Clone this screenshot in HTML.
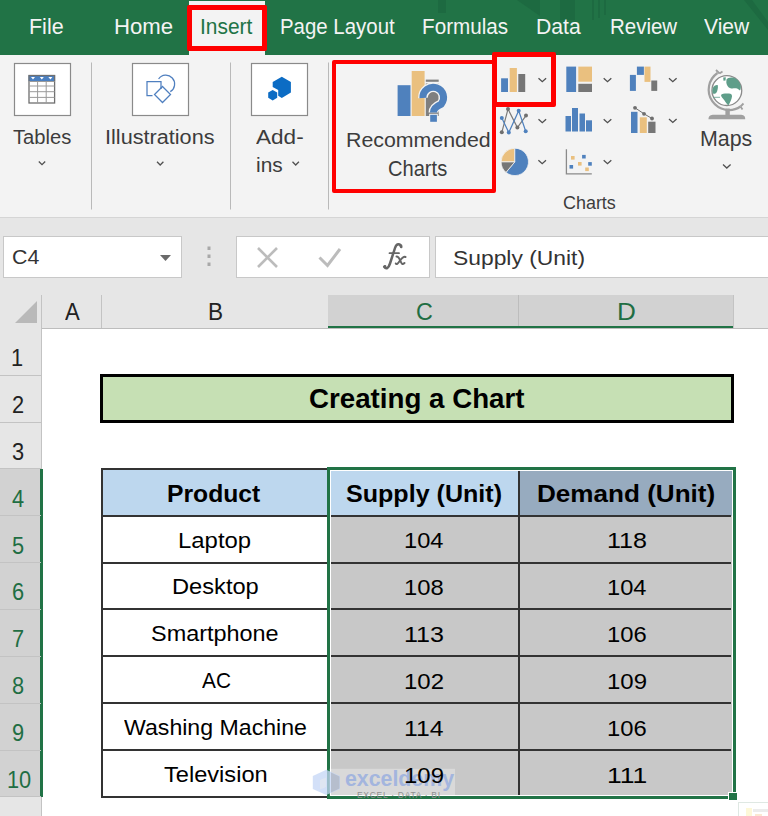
<!DOCTYPE html>
<html><head><meta charset="utf-8">
<style>
*{margin:0;padding:0;box-sizing:border-box}
html,body{width:768px;height:816px;overflow:hidden;background:#fff;font-family:"Liberation Sans",sans-serif;position:relative}
.a{position:absolute}
.t{position:absolute;white-space:nowrap;line-height:1;transform-origin:0 0}
svg{position:absolute;left:0;top:0}
</style></head><body>
<!-- tab bar -->
<div class="a" style="left:0;top:0;width:768px;height:55px;background:#217346"></div>
<svg width="768" height="55" viewBox="0 0 768 55" style="position:absolute;left:0;top:0">
<g fill="#1d6a41">
<rect x="438" y="0" width="8" height="13"/>
<polygon points="517,0 540,0 540,16"/>
<rect x="560" y="0" width="15" height="20"/>
<rect x="592" y="0" width="2" height="20"/><rect x="598" y="0" width="2" height="18"/><rect x="604" y="0" width="2" height="15"/>
<polygon points="744,0 752,0 768,22 768,30"/>
</g>
</svg>
<div class="a" style="left:189px;top:1px;width:76px;height:54px;background:#f3f3f3"></div>
<!-- ribbon -->
<div class="a" style="left:0;top:55px;width:768px;height:162px;background:#f3f3f3"></div>
<div class="a" style="left:0;top:217px;width:768px;height:1px;background:#d5d5d5"></div>
<!-- formula band -->
<div class="a" style="left:0;top:218px;width:768px;height:77px;background:#e6e6e6"></div>
<div class="a" style="left:3px;top:236px;width:179px;height:42px;background:#fff;border:1px solid #c8c8c8"></div>
<div class="a" style="left:236px;top:236px;width:194px;height:42px;background:#fff;border:1px solid #c8c8c8"></div>
<div class="a" style="left:435px;top:236px;width:340px;height:42px;background:#fff;border:1px solid #c8c8c8"></div>
<!-- column header -->
<div class="a" style="left:0;top:295px;width:768px;height:33px;background:#e6e6e6"></div>
<div class="a" style="left:328px;top:295px;width:405.5px;height:33px;background:#d2d2d2"></div>
<div class="a" style="left:0;top:328px;width:768px;height:1px;background:#bdbdbd"></div>
<div class="a" style="left:328px;top:326px;width:405.5px;height:2.4px;background:#217346"></div>
<div class="a" style="left:41px;top:295px;width:1px;height:33px;background:#c3c3c3"></div>
<div class="a" style="left:101px;top:295px;width:1px;height:33px;background:#c3c3c3"></div>
<div class="a" style="left:518px;top:295px;width:1px;height:31px;background:#bdbdbd"></div>
<div class="a" style="left:733px;top:295px;width:1px;height:33px;background:#c3c3c3"></div>
<!-- row header -->
<div class="a" style="left:0;top:328px;width:42px;height:488px;background:#e6e6e6"></div>
<div class="a" style="left:0;top:469px;width:42px;height:328px;background:#d2d2d2"></div>
<div class="a" style="left:41px;top:328px;width:1px;height:141px;background:#c3c3c3"></div>
<div class="a" style="left:41px;top:797px;width:1px;height:19px;background:#c3c3c3"></div>
<div class="a" style="left:40px;top:469px;width:2.6px;height:328px;background:#217346"></div>
<div class="a" style="left:0;top:374.66px;width:41px;height:1px;background:#c3c3c3"></div>
<div class="a" style="left:0;top:421.52px;width:41px;height:1px;background:#c3c3c3"></div>
<div class="a" style="left:0;top:468.38px;width:41px;height:1px;background:#c3c3c3"></div>
<div class="a" style="left:0;top:515.24px;width:41px;height:1px;background:#c3c3c3"></div>
<div class="a" style="left:0;top:562.10px;width:41px;height:1px;background:#c3c3c3"></div>
<div class="a" style="left:0;top:608.96px;width:41px;height:1px;background:#c3c3c3"></div>
<div class="a" style="left:0;top:655.82px;width:41px;height:1px;background:#c3c3c3"></div>
<div class="a" style="left:0;top:702.68px;width:41px;height:1px;background:#c3c3c3"></div>
<div class="a" style="left:0;top:749.54px;width:41px;height:1px;background:#c3c3c3"></div>
<div class="a" style="left:0;top:796.40px;width:41px;height:1px;background:#c3c3c3"></div>
<!-- title box -->
<div class="a" style="left:100px;top:374px;width:634px;height:48.5px;background:#c6e0b4;border:3px solid #000"></div>
<!-- table -->
<div class="a" style="left:101.5px;top:469px;width:226.5px;height:47px;background:#bdd7ee"></div>
<div class="a" style="left:328px;top:469px;width:191px;height:47px;background:#bdd7ee"></div>
<div class="a" style="left:519px;top:469px;width:214px;height:47px;background:#97abbf"></div>
<div class="a" style="left:328px;top:516px;width:405px;height:281px;background:#c8c8c8"></div>
<div class="a" style="left:101px;top:514.74px;width:630px;height:2px;background:#333"></div>
<div class="a" style="left:101px;top:561.60px;width:630px;height:2px;background:#333"></div>
<div class="a" style="left:101px;top:608.46px;width:630px;height:2px;background:#333"></div>
<div class="a" style="left:101px;top:655.32px;width:630px;height:2px;background:#333"></div>
<div class="a" style="left:101px;top:702.18px;width:630px;height:2px;background:#333"></div>
<div class="a" style="left:101px;top:749.04px;width:630px;height:2px;background:#333"></div>
<div class="a" style="left:101px;top:467.88px;width:630px;height:2px;background:#333"></div>
<div class="a" style="left:101px;top:795.90px;width:227px;height:2px;background:#333"></div>
<div class="a" style="left:101.20px;top:467.88px;width:2px;height:330.02px;background:#333"></div>
<div class="a" style="left:327.20px;top:467.88px;width:2px;height:330.02px;background:#333"></div>
<div class="a" style="left:517.80px;top:467.88px;width:2px;height:330.02px;background:#333"></div>
<!-- selection -->
<div class="a" style="left:326.7px;top:467px;width:409px;height:332.2px;border:3px solid #217346"></div>
<div class="a" style="left:329.7px;top:470px;width:403px;height:326.2px;border:1.5px solid #fff"></div>
<div class="a" style="left:729.3px;top:792.8px;width:7.5px;height:7.5px;background:#217346;outline:1.2px solid #fff"></div>
<!-- watermark -->
<svg width="768" height="816" viewBox="0 0 768 816" style="position:absolute;left:0;top:0">
<rect x="329.5" y="768.8" width="125.5" height="26.8" fill="#fff" opacity="0.32"/>
<polygon points="326.3,769.8 340,776 340,789 326.3,795 312.8,789 312.8,776" fill="#c4d5f5" opacity="0.75"/>
<polygon points="331,772.5 339.5,776.5 339.5,788.5 331,792.5" fill="#a8adb5" opacity="0.6"/>
<polygon points="320,780 326,777.5 326,787 320,789.5" fill="#e8eaee" opacity="0.6"/>
<text x="345" y="786.3" font-family="Liberation Sans" font-weight="bold" font-size="21.5" fill="#a3b5de" textLength="109" lengthAdjust="spacingAndGlyphs">exceldemy</text>
<text x="357" y="797.5" font-family="Liberation Sans" font-size="8.5" fill="#8f8f8f" textLength="83" lengthAdjust="spacing">EXCEL · DATA · BI</text>
</svg>
<!-- quick analysis -->
<div class="a" style="left:738px;top:802px;width:40px;height:20px;background:#fff;border:1px solid #dfe8e3"></div>
<div class="a" style="left:746px;top:808px;width:6px;height:8px;background:#fdf8d8"></div>
<div class="a" style="left:753px;top:809px;width:15px;height:3px;background:#ececec"></div>
<div class="a" style="left:755px;top:814px;width:7px;height:2px;background:#fbe8d2"></div>
<!-- red boxes -->
<div class="a" style="left:187px;top:5px;width:80px;height:45.5px;border:5px solid #f00;border-radius:2px"></div>
<div class="a" style="left:332px;top:60px;width:164px;height:133px;border:4.8px solid #f00;border-radius:2px"></div>
<div class="a" style="left:492px;top:52px;width:63.5px;height:54.5px;border:5px solid #f00;border-radius:2px"></div>
<svg width="768" height="816" viewBox="0 0 768 816">
<!-- Ribbon icon boxes -->
<rect x="14.5" y="63.5" width="56" height="52" fill="#fff" stroke="#8a8a8a" stroke-width="1.2"/>
<rect x="132.5" y="63.5" width="56" height="52" fill="#fff" stroke="#8a8a8a" stroke-width="1.2"/>
<rect x="251.5" y="63.5" width="56" height="52" fill="#fff" stroke="#8a8a8a" stroke-width="1.2"/>
<!-- separators -->
<rect x="91" y="62.5" width="1" height="147" fill="#b9b9b9"/>
<rect x="230" y="62.5" width="1" height="147" fill="#b9b9b9"/>
<rect x="328" y="62.5" width="1" height="147" fill="#b9b9b9"/>
<!-- table icon -->
<rect x="28.5" y="75.2" width="26.6" height="6" fill="#4a7fc0"/>
<rect x="29" y="75.5" width="25.6" height="27.5" fill="none" stroke="#6f6f6f" stroke-width="1.3"/>
<g stroke="#9a9a9a" stroke-width="1">
<line x1="29" y1="86" x2="54.6" y2="86"/><line x1="29" y1="91.7" x2="54.6" y2="91.7"/><line x1="29" y1="97.4" x2="54.6" y2="97.4"/>
<line x1="29" y1="81.5" x2="54.6" y2="81.5"/>
<line x1="37.6" y1="81" x2="37.6" y2="103"/><line x1="46.2" y1="81" x2="46.2" y2="103"/>
</g>
<g fill="#fff"><path d="M31,77 h4 l-2,2.5z"/><path d="M39.8,77 h4 l-2,2.5z"/><path d="M48.4,77 h4 l-2,2.5z"/></g>
<!-- illustrations icon -->
<g fill="none" stroke="#4f7fbf" stroke-width="1.25">
<path d="M152.5,95.5 H147 V81.5 H161 V89"/>
<path d="M162.5,86.5 L170.5,94.5 L162.5,102.5 L154.5,94.5 Z"/>
<path d="M158.6,79 A8.8,8.8 0 1 1 170.3,91.6"/>
</g>
<!-- add-ins icon -->
<path fill="#0c6cc4" d="M281.8,76.8 L290.9,82 L290.9,92.6 L281.8,97.9 L278.2,95.8 L278.2,90 L272.7,86.9 L272.7,82 Z"/>
<path fill="#0c6cc4" d="M272.7,90 L277.2,92.6 L277.2,97.8 L272.7,100.4 L268.2,97.8 L268.2,92.6 Z"/>
<!-- recommended charts icon -->
<rect x="397.6" y="85.2" width="12.9" height="30.8" fill="#4f81bd"/>
<rect x="411.7" y="71" width="12.9" height="45" fill="#eac07f"/>
<rect x="425.8" y="79.6" width="12.9" height="2.2" fill="#7f7f7f"/>
<rect x="425.8" y="83.5" width="12.9" height="32.5" fill="#7f7f7f"/>
<path d="M422.9,98 A10.35,10.35 0 1 1 441.2,104.2 Q433.4,107.5 433.4,112.5" fill="none" stroke="#f3f3f3" stroke-width="9.6"/>
<path d="M422.9,98 A10.35,10.35 0 1 1 441.2,104.2 Q433.4,107.5 433.4,112.5" fill="none" stroke="#4f81bd" stroke-width="7"/>
<rect x="429.2" y="113.8" width="8.6" height="9" fill="#f3f3f3"/>
<rect x="430.2" y="114.8" width="6.7" height="7" fill="#4f81bd"/>
<!-- charts group: column -->
<rect x="501.1" y="78.3" width="6.9" height="13.7" fill="#4f81bd"/>
<rect x="509.7" y="68" width="7.2" height="24" fill="#eac07f"/>
<rect x="518.3" y="74" width="6.9" height="18" fill="#767676"/>
<!-- hierarchy -->
<rect x="566.3" y="66.6" width="9.8" height="25.4" fill="#4f81bd"/>
<rect x="578.3" y="66.6" width="13.7" height="15.1" fill="#eac07f"/>
<rect x="578.3" y="83.8" width="13.7" height="8.2" fill="#767676"/>
<!-- waterfall -->
<rect x="629.9" y="74.9" width="6" height="16" fill="#4f81bd"/>
<rect x="636.9" y="66.6" width="7" height="8.3" fill="#4f81bd"/>
<rect x="644.5" y="66.6" width="6" height="15.3" fill="#eac07f"/>
<rect x="651.3" y="80.5" width="5.9" height="10.4" fill="#767676"/>
<!-- line/scatter -->
<polyline points="501.8,132.3 508,109.1 517.4,127.6 526,115.6" fill="none" stroke="#7a7a7a" stroke-width="1.2"/>
<polyline points="501.8,118 508.8,132.6 518.7,110.7 525.7,131.25" fill="none" stroke="#4f81bd" stroke-width="1.2"/>
<g fill="#6f6f6f"><circle cx="501.8" cy="132.3" r="2"/><circle cx="508" cy="109.1" r="2"/><circle cx="517.4" cy="127.6" r="2"/><circle cx="526" cy="115.6" r="2"/></g>
<g fill="#4f81bd"><circle cx="501.8" cy="118" r="2"/><circle cx="508.8" cy="132.6" r="2"/><circle cx="518.7" cy="110.7" r="2"/><circle cx="525.7" cy="131.25" r="2"/></g>
<!-- column 2 -->
<g fill="#4f81bd">
<rect x="565.5" y="116" width="5.5" height="15.5"/>
<rect x="572" y="108" width="6" height="23.5"/>
<rect x="579.5" y="113.5" width="5.5" height="18"/>
<rect x="586" y="120.3" width="6" height="11.2"/>
</g>
<!-- combo -->
<rect x="631" y="111.8" width="6.5" height="21.2" fill="#4f81bd"/>
<rect x="639.8" y="117.3" width="7" height="15.7" fill="#eac07f"/>
<rect x="648.2" y="121.7" width="7.3" height="11.3" fill="#767676"/>
<polyline points="635,107.8 644,113.8 652,118.5" fill="none" stroke="#6f6f6f" stroke-width="1"/>
<g fill="#6f6f6f"><circle cx="635" cy="107.8" r="1.9"/><circle cx="644" cy="113.8" r="1.9"/><circle cx="652" cy="118.5" r="1.9"/></g>
<!-- pie -->
<path d="M514.8,161.9 L501.1,161.9 A13.7,13.7 0 0 1 514.8,148.2 Z" fill="#eac07f" stroke="#f3f3f3" stroke-width="0.8"/>
<path d="M514.8,161.9 L514.8,148.2 A13.7,13.7 0 1 1 506,172.4 Z" fill="#4f81bd" stroke="#f3f3f3" stroke-width="0.8"/>
<path d="M514.8,161.9 L506,172.4 A13.7,13.7 0 0 1 501.1,161.9 Z" fill="#767676" stroke="#f3f3f3" stroke-width="0.8"/>
<!-- scatter -->
<polyline points="566.4,149.3 566.4,173.9 591.8,173.9" fill="none" stroke="#8a8a8a" stroke-width="1.3"/>
<g fill="#eac07f"><rect x="571" y="156" width="3.6" height="3.6"/><rect x="578" y="162" width="3.6" height="3.6"/><rect x="585.2" y="167.5" width="3.6" height="3.6"/></g>
<g fill="#4f81bd"><rect x="582.1" y="154.9" width="3.6" height="3.6"/><rect x="588.2" y="162.1" width="3.6" height="3.6"/><rect x="569.5" y="165" width="3.6" height="3.6"/></g>
<!-- globe -->
<path d="M717.5,73 A19.5,19.5 0 0 0 740.5,106.5" fill="none" stroke="#a0a0a0" stroke-width="2.2"/>
<path d="M716,70 l3.5,3.5 M719.5,73.5 l3,-2" stroke="#a0a0a0" stroke-width="1.8" fill="none"/>
<path d="M740.5,106.5 l3,-3 M740.5,106.5 l2,3" stroke="#a0a0a0" stroke-width="1.8" fill="none"/>
<circle cx="726.85" cy="90.6" r="14.9" fill="#fff" stroke="#8a8a8a" stroke-width="1.3"/>
<path fill="#5f9e8a" d="M726.5,79.5 C727.5,77.5 731,77 734,77.8 C737.5,79 740,82 740.8,86 C741,88 740.6,90 740,90.5 C738.5,89.5 737.5,88.5 736,88.3 C734,88.2 732.5,88.8 730.5,88.3 C728,87.5 726.5,85 726.3,82.5 Z"/>
<path fill="#5f9e8a" d="M721,95 C722,93.5 726,93.4 729,93.6 C731,93.8 732.2,94.5 732,96.5 C731.6,99.5 730,102.5 728.5,105.3 C727,104.5 725.8,102.5 724.5,100.5 C723,98.5 721.2,97 721,95 Z"/>
<path fill="#5f9e8a" d="M712.8,88 C713.8,85.8 716,84.8 717.8,85.2 C718.2,87.5 717.6,90.5 716.5,92.5 C715.5,94 713.5,94.4 712.6,93 C712.2,91.5 712.3,89.5 712.8,88 Z"/>
<path fill="#5f9e8a" d="M723.2,77.5 l2.6,-0.3 l-0.3,3.2 l-2,0.3z"/>
<path d="M713,97.3 H720" stroke="#5f9e8a" stroke-width="0.8"/>
<rect x="725.4" y="108.5" width="4.4" height="7" fill="#a0a0a0"/>
<path d="M708.5,119.2 C708.5,116 710.5,114.8 714,114.8 L740,114.8 C743.5,114.8 745.2,116 745.2,119.2 Z" fill="#a0a0a0"/>
<!-- chevrons -->
<g fill="none" stroke="#505050" stroke-width="1.3">
<path d="M38.8,161.5 l3.2,3.2 l3.2,-3.2"/>
<path d="M157,161.8 l3.2,3.2 l3.2,-3.2"/>
<path d="M292.5,161.8 l3.2,3.2 l3.2,-3.2"/>
<path d="M723,164.5 l3.8,3.5 l3.8,-3.5"/>
<path d="M538.5,78.2 l3.8,3.5 l3.8,-3.5"/>
<path d="M603.7,78.2 l3.8,3.5 l3.8,-3.5"/>
<path d="M669,78.2 l3.8,3.5 l3.8,-3.5"/>
<path d="M538.5,119.2 l3.8,3.5 l3.8,-3.5"/>
<path d="M603.7,119.2 l3.8,3.5 l3.8,-3.5"/>
<path d="M669,118.9 l3.8,3.5 l3.8,-3.5"/>
<path d="M538.4,160.2 l3.8,3.5 l3.8,-3.5"/>
<path d="M603.7,160.2 l3.8,3.5 l3.8,-3.5"/>
</g>
<!-- formula bar icons -->
<path d="M160,255 h11 l-5.5,6z" fill="#6a6a6a"/>
<g fill="#a8a8a8"><rect x="207.5" y="246.5" width="3" height="3.5"/><rect x="207.5" y="254.5" width="3" height="3.5"/><rect x="207.5" y="262.5" width="3" height="3.5"/></g>
<path d="M258,248 L277,267 M277,248 L258,267" stroke="#bcbcbc" stroke-width="2.6" fill="none"/>
<path d="M319.5,257.5 L327.5,265.5 L340,249" stroke="#bcbcbc" stroke-width="3" fill="none"/>
<!-- fx -->
<g fill="none" stroke="#666" stroke-linecap="round">
<path d="M401.2,247 C400.5,243.5 396.5,243 395,248 L390,263.5 C388.5,268.5 386,269.5 384.2,266.8" stroke-width="2.5"/>
<path d="M389.5,253.2 H399" stroke-width="1.8"/>
<path d="M396.5,256.5 C398.5,256.5 399.5,258.5 400.5,261 C401.5,264 402.5,265 404.5,263" stroke-width="2"/>
<path d="M405.5,257 C403.5,256 402,258 400,260.5 C398,263.5 396.5,265 395.8,263.5" stroke-width="2"/>
</g>
<circle cx="401" cy="246" r="1.4" fill="#666"/>
<circle cx="385" cy="266.5" r="1.4" fill="#666"/>
<!-- corner triangle -->
<path d="M15,323 L37,301 L37,323 Z" fill="#b9b9b9"/>
</svg>

<div class="t" style="left:28.78px;top:17.34px;font-size:21.37px;color:#f4f4f4;transform:scaleX(1.0050);">File</div>
<div class="t" style="left:114.13px;top:17.34px;font-size:21.37px;color:#f4f4f4;transform:scaleX(1.0368);">Home</div>
<div class="t" style="left:200.31px;top:17.34px;font-size:21.37px;color:#217346;transform:scaleX(0.9807);">Insert</div>
<div class="t" style="left:279.97px;top:17.34px;font-size:21.37px;color:#f4f4f4;transform:scaleX(0.9562);">Page Layout</div>
<div class="t" style="left:422.14px;top:17.34px;font-size:21.37px;color:#f4f4f4;transform:scaleX(0.9682);">Formulas</div>
<div class="t" style="left:535.61px;top:17.34px;font-size:21.37px;color:#f4f4f4;transform:scaleX(0.9912);">Data</div>
<div class="t" style="left:609.86px;top:17.34px;font-size:21.37px;color:#f4f4f4;transform:scaleX(0.9578);">Review</div>
<div class="t" style="left:703.99px;top:17.34px;font-size:21.37px;color:#f4f4f4;transform:scaleX(0.9840);">View</div>
<div class="t" style="left:13.30px;top:126.58px;font-size:20.96px;color:#3c3c3c;transform:scaleX(0.9627);">Tables</div>
<div class="t" style="left:105.25px;top:126.58px;font-size:20.96px;color:#3c3c3c;transform:scaleX(1.0336);">Illustrations</div>
<div class="t" style="left:256.20px;top:126.58px;font-size:20.96px;color:#3c3c3c;transform:scaleX(1.0764);">Add-</div>
<div class="t" style="left:256.14px;top:155.38px;font-size:20.96px;color:#3c3c3c;transform:scaleX(0.9950);">ins</div>
<div class="t" style="left:345.59px;top:130.48px;font-size:20.96px;color:#3c3c3c;transform:scaleX(1.0182);">Recommended</div>
<div class="t" style="left:388.39px;top:158.45px;font-size:21.23px;color:#3c3c3c;transform:scaleX(0.9469);">Charts</div>
<div class="t" style="left:700.49px;top:129.42px;font-size:21.51px;color:#3c3c3c;transform:scaleX(0.9938);">Maps</div>
<div class="t" style="left:563.20px;top:193.83px;font-size:18.90px;color:#3c3c3c;transform:scaleX(0.9488);">Charts</div>
<div class="t" style="left:12.33px;top:248.12px;font-size:19.86px;color:#333;transform:scaleX(1.0740);">C4</div>
<div class="t" style="left:453.46px;top:247.57px;font-size:20.27px;color:#333;transform:scaleX(1.1274);">Supply (Unit)</div>
<div class="t" style="left:64.60px;top:300.97px;font-size:23.56px;color:#222;transform:scaleX(0.9389);">A</div>
<div class="t" style="left:208.39px;top:300.97px;font-size:23.56px;color:#222;transform:scaleX(0.9589);">B</div>
<div class="t" style="left:415.73px;top:300.97px;font-size:23.56px;color:#1f6e43;transform:scaleX(0.9903);">C</div>
<div class="t" style="left:616.91px;top:300.97px;font-size:23.56px;color:#1f6e43;transform:scaleX(1.1106);">D</div>
<div class="t" style="left:309.09px;top:386.18px;font-size:26.85px;color:#000;font-weight:bold;transform:scaleX(1.0321);">Creating a Chart</div>
<div class="t" style="left:167.17px;top:482.11px;font-size:24.11px;color:#000;font-weight:bold;transform:scaleX(1.0246);">Product</div>
<div class="t" style="left:345.75px;top:482.11px;font-size:24.11px;color:#000;font-weight:bold;transform:scaleX(1.0403);">Supply (Unit)</div>
<div class="t" style="left:536.87px;top:482.11px;font-size:24.11px;color:#000;font-weight:bold;transform:scaleX(1.0817);">Demand (Unit)</div>
<div class="t" style="left:178.29px;top:530.56px;font-size:21.51px;color:#000;transform:scaleX(1.1118);">Laptop</div>
<div class="t" style="left:403.91px;top:530.44px;font-size:21.64px;color:#000;transform:scaleX(1.0929);">104</div>
<div class="t" style="left:606.69px;top:530.44px;font-size:21.64px;color:#000;transform:scaleX(1.1598);">118</div>
<div class="t" style="left:172.31px;top:577.42px;font-size:21.51px;color:#000;transform:scaleX(1.1002);">Desktop</div>
<div class="t" style="left:403.90px;top:577.30px;font-size:21.64px;color:#000;transform:scaleX(1.0999);">108</div>
<div class="t" style="left:606.81px;top:577.30px;font-size:21.64px;color:#000;transform:scaleX(1.0929);">104</div>
<div class="t" style="left:150.93px;top:624.28px;font-size:21.51px;color:#000;transform:scaleX(1.0896);">Smartphone</div>
<div class="t" style="left:403.79px;top:624.16px;font-size:21.64px;color:#000;transform:scaleX(1.1598);">113</div>
<div class="t" style="left:606.80px;top:624.16px;font-size:21.64px;color:#000;transform:scaleX(1.0999);">106</div>
<div class="t" style="left:202.10px;top:671.14px;font-size:21.51px;color:#000;transform:scaleX(0.9678);">AC</div>
<div class="t" style="left:403.88px;top:671.02px;font-size:21.64px;color:#000;transform:scaleX(1.1071);">102</div>
<div class="t" style="left:606.78px;top:671.02px;font-size:21.64px;color:#000;transform:scaleX(1.1071);">109</div>
<div class="t" style="left:124.30px;top:718.00px;font-size:21.51px;color:#000;transform:scaleX(1.0753);">Washing Machine</div>
<div class="t" style="left:403.82px;top:717.88px;font-size:21.64px;color:#000;transform:scaleX(1.1442);">114</div>
<div class="t" style="left:606.80px;top:717.88px;font-size:21.64px;color:#000;transform:scaleX(1.0999);">106</div>
<div class="t" style="left:163.93px;top:764.86px;font-size:21.51px;color:#000;transform:scaleX(1.0982);">Television</div>
<div class="t" style="left:403.88px;top:764.74px;font-size:21.64px;color:#000;transform:scaleX(1.1071);">109</div>
<div class="t" style="left:606.58px;top:764.74px;font-size:21.64px;color:#000;transform:scaleX(1.2265);">111</div>
<div class="t" style="left:11.37px;top:347.06px;font-size:23.70px;color:#222;transform:scaleX(0.92)">1</div>
<div class="t" style="left:11.70px;top:393.92px;font-size:23.70px;color:#222;transform:scaleX(0.92)">2</div>
<div class="t" style="left:11.80px;top:440.78px;font-size:23.70px;color:#222;transform:scaleX(0.92)">3</div>
<div class="t" style="left:11.80px;top:487.64px;font-size:23.70px;color:#1f6e43;transform:scaleX(0.92)">4</div>
<div class="t" style="left:11.70px;top:534.50px;font-size:23.70px;color:#1f6e43;transform:scaleX(0.92)">5</div>
<div class="t" style="left:11.70px;top:581.36px;font-size:23.70px;color:#1f6e43;transform:scaleX(0.92)">6</div>
<div class="t" style="left:11.70px;top:628.22px;font-size:23.70px;color:#1f6e43;transform:scaleX(0.92)">7</div>
<div class="t" style="left:11.80px;top:675.08px;font-size:23.70px;color:#1f6e43;transform:scaleX(0.92)">8</div>
<div class="t" style="left:11.70px;top:721.94px;font-size:23.70px;color:#1f6e43;transform:scaleX(0.92)">9</div>
<div class="t" style="left:6.76px;top:768.80px;font-size:23.70px;color:#1f6e43;transform:scaleX(0.92)">10</div>
</body></html>
